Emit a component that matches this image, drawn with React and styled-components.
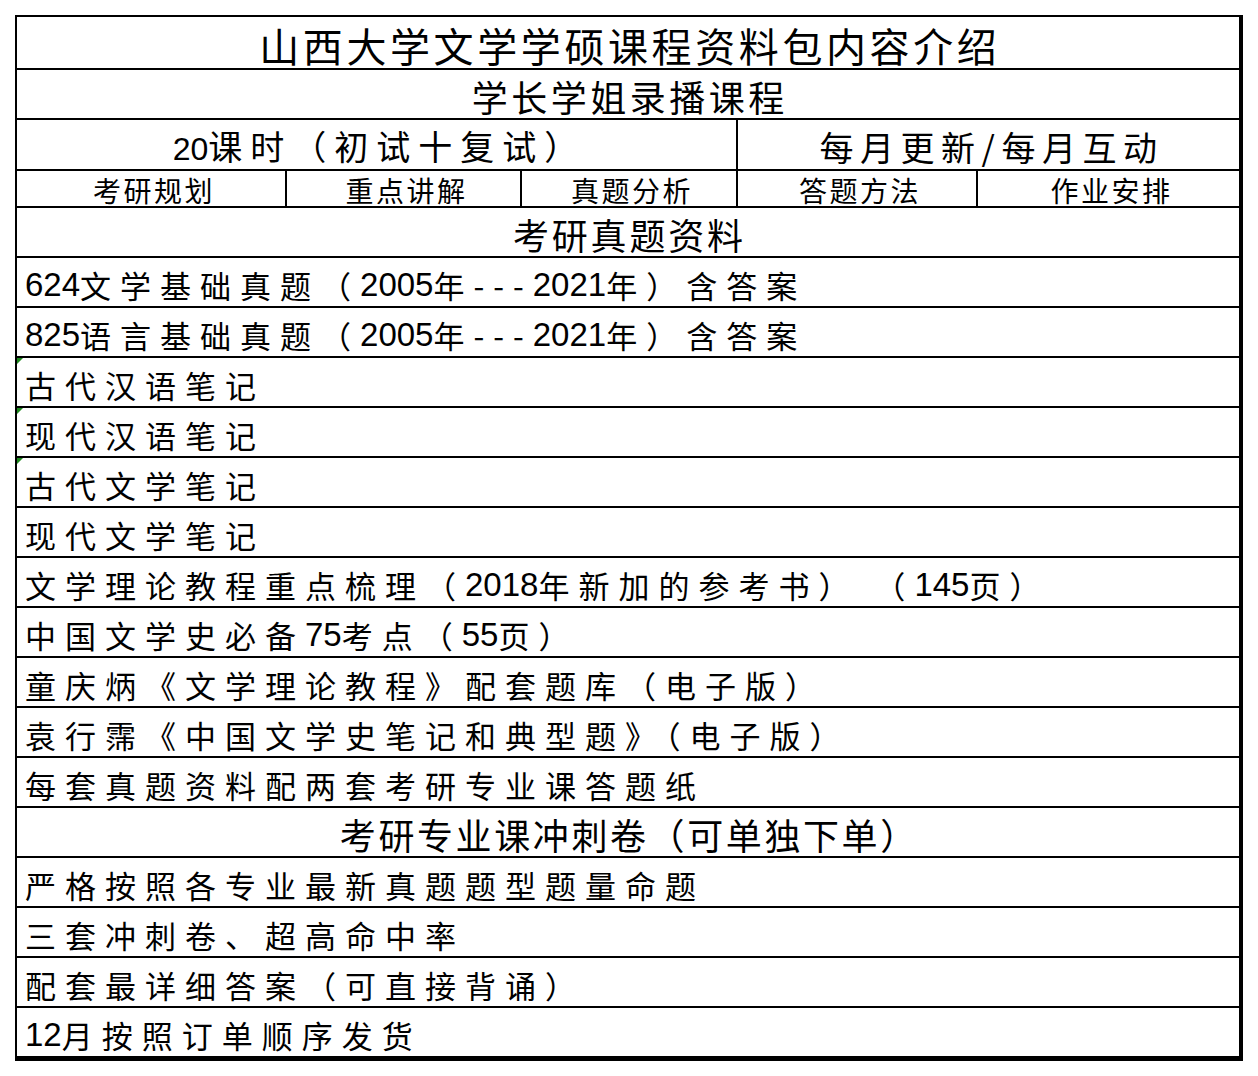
import React from "react";
import styled, { createGlobalStyle } from "styled-components";

const GlobalStyle = createGlobalStyle`
  html, body {
    margin: 0;
    padding: 0;
    background: #ffffff;
  }
  body {
    font-family: "Noto Sans CJK SC", "Liberation Sans", sans-serif;
    color: #000;
  }
`;

const materials = [
  "624文学基础真题（2005年---2021年）含答案",
  "825语言基础真题（2005年---2021年）含答案",
  { text: "古代汉语笔记", flag: true },
  { text: "现代汉语笔记", flag: true },
  { text: "古代文学笔记", flag: true },
  "现代文学笔记",
  "文学理论教程重点梳理（2018年新加的参考书） （145页）",
  "中国文学史必备75考点（55页）",
  "童庆炳《文学理论教程》配套题库（电子版）",
  "袁行霈《中国文学史笔记和典型题》（电子版）",
  "每套真题资料配两套考研专业课答题纸",
];

const sprint = [
  "严格按照各专业最新真题题型题量命题",
  "三套冲刺卷、超高命中率",
  "配套最详细答案（可直接背诵）",
  "12月按照订单顺序发货",
];

const lessons = ["考研规划", "重点讲解", "真题分析", "答题方法", "作业安排"];

// digits go in a latin face, everything else keeps the wide cjk spacing
const Mixed = ({ text, size = 31, numSize = 33, gap = 9 }) =>
  text
    .split(/(\d+)/)
    .filter(Boolean)
    .map((part, i) =>
      /^\d+$/.test(part) ? (
        <Num key={i} $size={numSize}>
          {part}
        </Num>
      ) : (
        <Han key={i} $size={size} $gap={gap}>
          {part}
        </Han>
      )
    );

const App = () => {
  const last = sprint.length - 1;
  return (
    <Page>
      <GlobalStyle />
      <Sheet>
        <Row $h={53}>
          <Cell $pt={5}>
            <Heading $size={40} $gap={3.6}>
              山西大学文学学硕课程资料包内容介绍
            </Heading>
          </Cell>
        </Row>
        <Row $h={50}>
          <Cell $pt={5}>
            <Heading $size={36} $gap={3.5}>
              学长学姐录播课程
            </Heading>
          </Cell>
        </Row>
        <Row $h={51} $cols="721px 1fr">
          <Cell $divider $pt={5}>
            <Centered>
              <Mixed text="20课时（初试十复试）" size={34} numSize={32} gap={8} />
            </Centered>
          </Cell>
          <Cell $pt={5}>
            <Centered>
              <Mixed text="每月更新/每月互动" size={34} gap={6.5} />
            </Centered>
          </Cell>
        </Row>
        <Row $h={37} $cols="270px 235px 216px 240px 1fr">
          {lessons.map((item, i) => (
            <Cell key={item} $divider={i < lessons.length - 1} $pt={3}>
              <Centered>
                <Han $size={28} $gap={2.5}>
                  {item}
                </Han>
              </Centered>
            </Cell>
          ))}
        </Row>
        <Row $h={50}>
          <Cell $pt={5}>
            <Heading $size={36} $gap={2.8}>
              考研真题资料
            </Heading>
          </Cell>
        </Row>
        {materials.map((m) => {
          const item = typeof m === "string" ? { text: m } : m;
          return (
            <Row key={item.text} $h={50}>
              <Cell $left $pt={6}>
                {item.flag && <Flag />}
                <Mixed text={item.text} />
              </Cell>
            </Row>
          );
        })}
        <Row $h={50}>
          <Cell $pt={5}>
            <Heading $size={36} $gap={2.6}>
              考研专业课冲刺卷（可单独下单）
            </Heading>
          </Cell>
        </Row>
        {sprint.map((text, i) => (
          <Row key={text} $h={i === last ? 48 : 50} $last={i === last}>
            <Cell $left $pt={6}>
              <Mixed text={text} />
            </Cell>
          </Row>
        ))}
      </Sheet>
    </Page>
  );
};

export default App;

const Page = styled.div`
  padding: 15px 0 0 15px;
`;

const Sheet = styled.div`
  box-sizing: border-box;
  width: 1228px;
  border-left: 2px solid #000;
  border-top: 2px solid #000;
  border-right: 4px solid #000;
  border-bottom: 5px solid #000;
  background: #fff;
`;

const Row = styled.div`
  box-sizing: border-box;
  display: grid;
  grid-template-columns: ${(p) => p.$cols || "1fr"};
  height: ${(p) => p.$h}px;
  border-bottom: ${(p) => (p.$last ? "none" : "2px solid #000")};
`;

const Cell = styled.div`
  position: relative;
  box-sizing: border-box;
  display: flex;
  align-items: center;
  justify-content: ${(p) => (p.$left ? "flex-start" : "center")};
  padding: ${(p) => p.$pt || 0}px 0 0 ${(p) => (p.$left ? 8 : 0)}px;
  border-right: ${(p) => (p.$divider ? "2px solid #000" : "none")};
  white-space: pre;
  line-height: 1.15;
`;

const Centered = styled.div`
  display: flex;
  align-items: baseline;
  /* trailing letter-spacing would push the text left */
  margin-right: -6px;
`;

const Heading = styled.span`
  font-family: "Noto Sans CJK SC", sans-serif;
  font-size: ${(p) => p.$size}px;
  letter-spacing: ${(p) => p.$gap}px;
  margin-right: -${(p) => p.$gap}px;
  line-height: 1.15;
`;

const Han = styled.span`
  font-family: "Noto Sans CJK SC", sans-serif;
  font-size: ${(p) => p.$size}px;
  letter-spacing: ${(p) => p.$gap}px;
  line-height: 1.15;
`;

const Num = styled.span`
  font-family: "Liberation Sans", Arial, sans-serif;
  font-size: ${(p) => p.$size}px;
  line-height: 1.15;
`;

const Flag = styled.span`
  position: absolute;
  top: 0;
  left: 0;
  width: 0;
  height: 0;
  border-top: 6px solid #1f8a1f;
  border-right: 6px solid transparent;
`;
